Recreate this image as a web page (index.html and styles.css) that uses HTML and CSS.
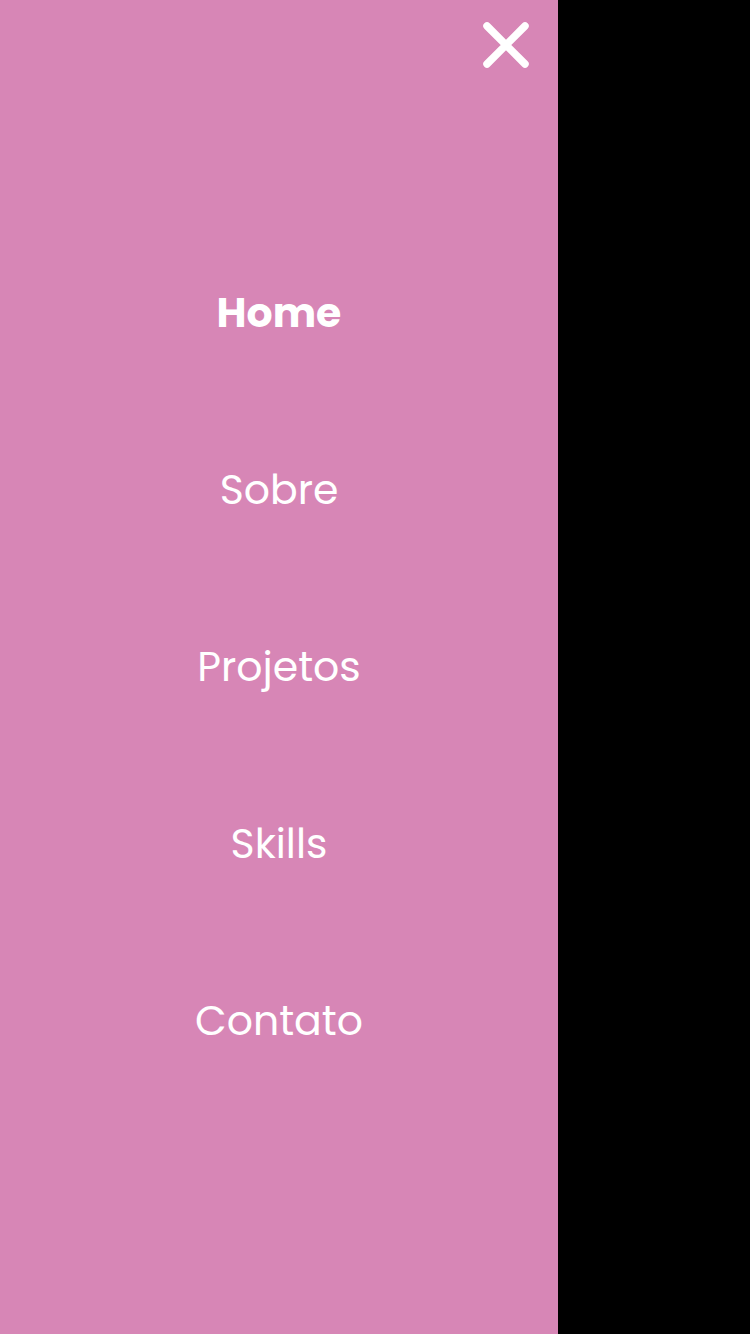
FILE: index.html
```html
<!DOCTYPE html>
<html lang="pt-BR">
<head>
    <meta charset="UTF-8">
    <meta name="viewport" content="width=device-width, initial-scale=1.0">
    <title>Menu</title>
    <link rel="stylesheet" href="styles.css">
</head>
<body>
    <aside class="menu">
        <div class="menu-top">
            <button class="menu-close" aria-label="Fechar menu">
                <svg width="46" height="46" viewBox="0 0 46 46">
                    <path d="M4 4 L42 42 M42 4 L4 42" stroke="#fff" stroke-width="7.5" stroke-linecap="round" fill="none"/>
                </svg>
            </button>
        </div>
        <nav class="menu-nav">
            <a href="#home" class="menu-link active">Home</a>
            <a href="#sobre" class="menu-link">Sobre</a>
            <a href="#projetos" class="menu-link">Projetos</a>
            <a href="#skills" class="menu-link">Skills</a>
            <a href="#contato" class="menu-link">Contato</a>
        </nav>
    </aside>
</body>
</html>
```
FILE: styles.css
```css
body { margin: 0; background: #000; font-family: Poppins, "Open Sans", sans-serif; }
.menu { width: 558px; height: 100vh; background: #d786b6; display: flex; flex-direction: column; padding-bottom: 68px; box-sizing: border-box; }
.menu-top { height: 68px; display: flex; justify-content: flex-end; align-items: flex-start; padding: 22px 29px 0 0; box-sizing: border-box; }
.menu-close { background: none; border: 0; padding: 0; cursor: pointer; display: block; }
.menu-close svg { display: block; }
.menu-nav { flex: 1; display: flex; flex-direction: column; justify-content: center; align-items: center; gap: 117px; }
.menu-link { display: block; color: #fff; text-decoration: none; font-size: 41px; line-height: 60px; font-weight: 400; }
.menu-link.active { font-weight: 700; }
```
